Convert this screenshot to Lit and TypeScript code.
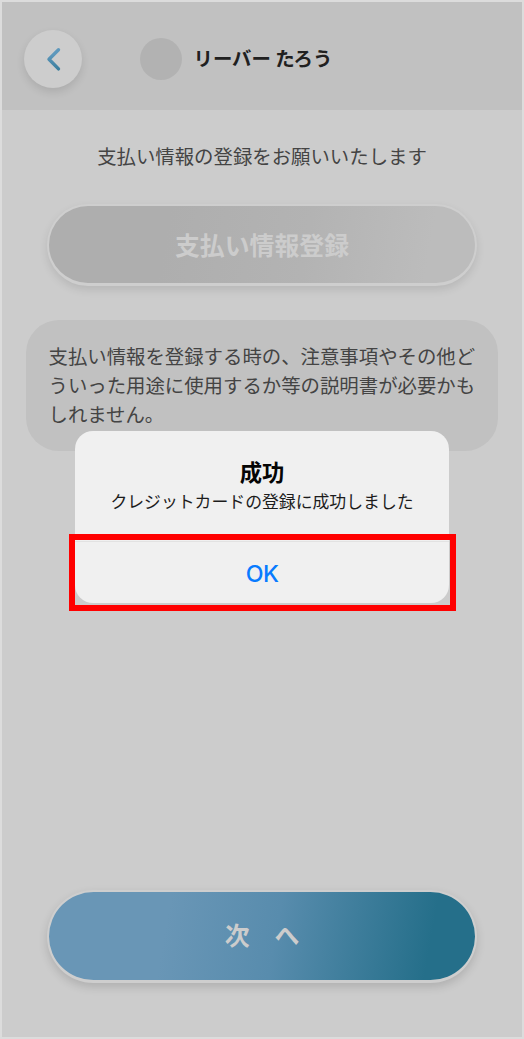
import { LitElement, html, css } from "lit";
import { customElement } from "lit/decorators.js";

@customElement("app-root")
export class AppRoot extends LitElement {
  static styles = css`
    :host {
      display: block;
      font-family: "Noto Sans CJK JP", sans-serif;
    }
    * {
      box-sizing: border-box;
    }
    button {
      font: inherit;
      margin: 0;
      padding: 0;
    }
    .screen {
      position: relative;
      display: flex;
      flex-direction: column;
      height: 1039px;
      border: 2px solid #dcdcdc;
      background: #cccccc;
      color: #444444;
      overflow: hidden;
    }
    .header {
      display: flex;
      align-items: center;
      height: 108px;
      padding: 6.5px 22px 0;
      background: #c1c1c1;
    }
    .back {
      display: grid;
      place-items: center;
      width: 58px;
      height: 58px;
      border: 0;
      border-radius: 50%;
      background: #cdcdcd;
      box-shadow: 0 4px 8px rgba(0, 0, 0, 0.11);
    }
    .avatar {
      width: 42px;
      height: 42px;
      margin-left: 57.5px;
      border-radius: 50%;
      background: #b2b2b2;
    }
    .name {
      margin: -3px 0 0 12px;
      font-size: 19.4px;
      line-height: 29px;
      font-weight: 700;
      color: #202020;
      white-space: nowrap;
    }
    .main {
      flex: 1;
      display: flex;
      flex-direction: column;
      align-items: center;
      padding: 31px 24px 54.5px;
      font-size: 19.4px;
      line-height: 29px;
    }
    .lead {
      margin: 0;
      white-space: nowrap;
    }
    .pill {
      flex: none;
      width: 430px;
      padding-bottom: 2px;
      border: 2px solid #cecece;
      border-radius: 50px;
      background-origin: border-box;
      font-size: 24.9px;
      line-height: 36px;
      font-weight: 700;
      color: #cccccc;
      white-space: pre;
    }
    .register {
      height: 82px;
      margin-top: 34px;
      border-bottom-width: 3px;
      background-image: linear-gradient(100deg, #aeaeae 28%, #b3b3b3 60%, #bcbcbc 88%);
      box-shadow: 0 4px 8px rgba(0, 0, 0, 0.1);
    }
    .note {
      width: 472px;
      height: 131px;
      margin: 34px 0 auto;
      padding: 21px 20px 0 22.5px;
      border-radius: 33px;
      background: #c1c1c1;
      white-space: nowrap;
    }
    .next {
      height: 93px;
      border-bottom-width: 3px;
      padding-bottom: 3px;
      background-image: linear-gradient(100deg, #6996b6 28%, #588cad 53%, #256f8a 88%);
      box-shadow: 0 4px 10px rgba(0, 0, 0, 0.14);
    }
    .dialog {
      position: absolute;
      left: 73px;
      top: 428.5px;
      width: 374px;
      height: 172px;
      display: flex;
      flex-direction: column;
      border-radius: 18px;
      background: #f0f0f0;
      color: #050505;
      text-align: center;
    }
    .body {
      height: 111px;
      padding-top: 24px;
      border-bottom: 1px solid #e2e2e2;
    }
    .title {
      margin: 0;
      font-size: 22.3px;
      line-height: 32px;
      font-weight: 700;
    }
    .message {
      margin: 1px 0 0;
      font-size: 16.85px;
      line-height: 26px;
      color: #1c1c1c;
      white-space: nowrap;
    }
    .ok {
      flex: 1;
      border: 0;
      background: none;
      color: #087bff;
      font-family: Inter, sans-serif;
      font-size: 23.2px;
      font-weight: 550;
      letter-spacing: -0.7px;
      padding-top: 3px;
    }
    .highlight {
      position: absolute;
      left: 67px;
      top: 532px;
      width: 387px;
      height: 77px;
      border: 6px solid #ff0000;
      pointer-events: none;
    }
  `;

  render() {
    return html`
      <div class="screen">
        <header class="header">
          <button class="back" aria-label="戻る">
            <svg width="20" height="28" viewBox="0 0 20 28" fill="none">
              <defs>
                <linearGradient id="arrow" x1="0" y1="3" x2="0" y2="25" gradientUnits="userSpaceOnUse">
                  <stop offset="0.3" stop-color="#5e98bc" />
                  <stop offset="1" stop-color="#397d9c" />
                </linearGradient>
              </defs>
              <path d="M15.5 4.7 6 14.2 15.5 23.9" stroke="url(#arrow)" stroke-width="3.4" stroke-linecap="round" stroke-linejoin="round" />
            </svg>
          </button>
          <div class="avatar"></div>
          <div class="name">リーバー たろう</div>
        </header>
        <main class="main">
          <p class="lead">支払い情報の登録をお願いいたします</p>
          <button class="pill register">支払い情報登録</button>
          <div class="note">
            支払い情報を登録する時の、注意事項やその他ど<br />ういった用途に使用するか等の説明書が必要かも<br />しれません。
          </div>
          <button class="pill next">次　へ</button>
        </main>
        <div class="dialog" role="alertdialog">
          <div class="body">
            <h1 class="title">成功</h1>
            <p class="message">クレジットカードの登録に成功しました</p>
          </div>
          <button class="ok">OK</button>
        </div>
        <div class="highlight"></div>
      </div>
    `;
  }
}
